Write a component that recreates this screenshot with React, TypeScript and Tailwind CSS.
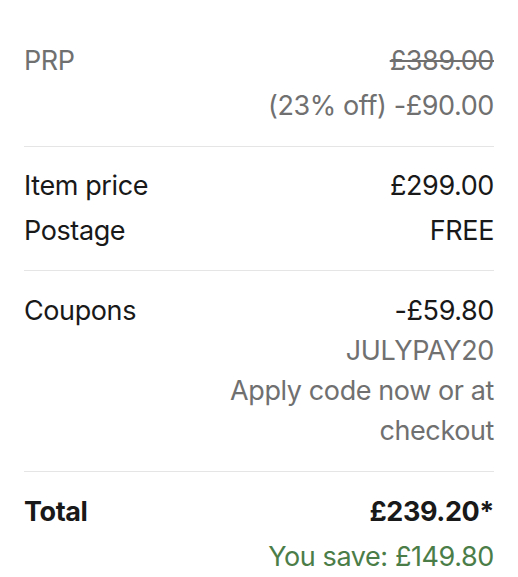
type Line = { text: string; className?: string };

type RowProps = {
  label: string;
  labelClassName?: string;
  values: Line[];
};

function Row({ label, labelClassName = "text-[#191919]", values }: RowProps) {
  return (
    <div className="flex justify-between items-start">
      <div className={labelClassName}>{label}</div>
      <div className="flex flex-col items-end text-right max-w-[62%] gap-[5px]">
        {values.map((v, i) => (
          <div key={i} className={v.className ?? "text-[#191919]"}>
            {v.text}
          </div>
        ))}
      </div>
    </div>
  );
}

export default function App() {
  return (
    <div className="bg-white w-[518px] h-[577px] px-6 pt-[21px] font-['Inter','Noto_Sans',sans-serif] text-[27px] leading-[40px] tracking-[-0.4px]">
      {/* list price */}
      <section className="py-5 border-b border-[#e5e5e5]">
        <Row
          label="PRP"
          labelClassName="text-[#707070]"
          values={[
            { text: "£389.00", className: "text-[#707070] line-through decoration-[1.5px]" },
            { text: "(23% off) -£90.00", className: "text-[#707070]" },
          ]}
        />
      </section>

      <section className="py-[19px] border-b border-[#e5e5e5] flex flex-col gap-[5px]">
        <Row label="Item price" values={[{ text: "£299.00" }]} />
        <Row label="Postage" values={[{ text: "FREE" }]} />
      </section>

      <section className="py-5 border-b border-[#e5e5e5]">
        <div className="flex justify-between items-start">
          <div className="text-[#191919]">Coupons</div>
          <div className="flex flex-col items-end text-right max-w-[62%]">
            <div className="text-[#191919]">-£59.80</div>
            <div className="text-[#707070]">JULYPAY20</div>
            <div className="text-[#707070]">Apply code now or at checkout</div>
          </div>
        </div>
      </section>

      <section className="py-5">
        <Row
          label="Total"
          labelClassName="text-[#191919] font-bold"
          values={[
            { text: "£239.20*", className: "text-[#191919] font-bold" },
            { text: "You save: £149.80", className: "text-[#4b7d48]" },
          ]}
        />
      </section>
    </div>
  );
}
